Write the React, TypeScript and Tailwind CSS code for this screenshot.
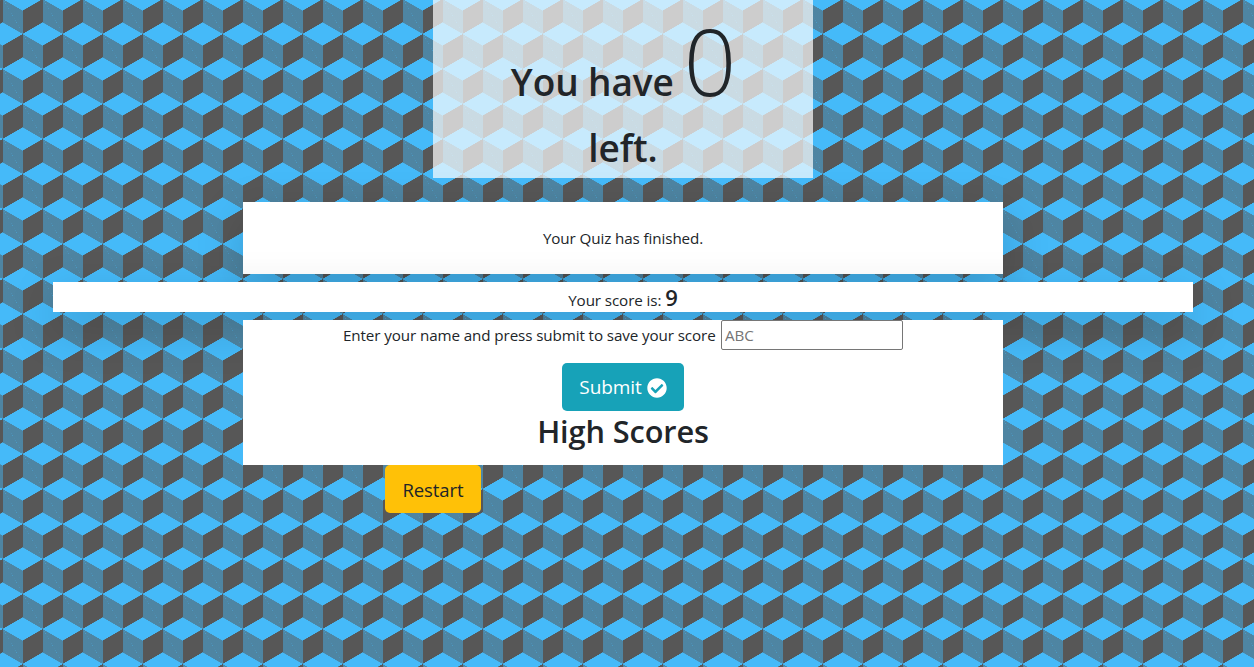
const cubes =
  "bg-[#575757] bg-size-[40px_70px] bg-position-[3px_34px,3px_34px,23px_69px,23px_69px,3px_34px,23px_69px] bg-[linear-gradient(30deg,#45baf9_12%,transparent_12.5%,transparent_87%,#45baf9_87.5%,#45baf9),linear-gradient(150deg,#45baf9_12%,transparent_12.5%,transparent_87%,#45baf9_87.5%,#45baf9),linear-gradient(30deg,#45baf9_12%,transparent_12.5%,transparent_87%,#45baf9_87.5%,#45baf9),linear-gradient(150deg,#45baf9_12%,transparent_12.5%,transparent_87%,#45baf9_87.5%,#45baf9),linear-gradient(60deg,#45baf977_25%,transparent_25.5%,transparent_75%,#45baf977_75%,#45baf977),linear-gradient(60deg,#45baf977_25%,transparent_25.5%,transparent_75%,#45baf977_75%,#45baf977)]";

function CheckCircle() {
  return (
    <svg viewBox="0 0 512 512" className="size-5" fill="currentColor" aria-hidden="true">
      <path d="M504 256c0 136.967-111.033 248-248 248S8 392.967 8 256 119.033 8 256 8s248 111.033 248 248zM227.314 387.314l184-184c6.248-6.248 6.248-16.379 0-22.627l-22.627-22.627c-6.248-6.249-16.379-6.249-22.628 0L216 308.118l-70.059-70.059c-6.248-6.248-16.379-6.248-22.628 0l-22.627 22.627c-6.248 6.248-6.248 16.379 0 22.627l104 104c6.249 6.249 16.379 6.249 22.628.001z" />
    </svg>
  );
}

export default function App() {
  return (
    <div
      className={`h-[667px] w-full font-['Open_Sans','Noto_Sans',sans-serif] text-[15.2px] tracking-[-0.1px] text-[#212529] ${cubes}`}
    >
      <div className="ml-[53px] flex w-[1140px] flex-col items-center">
        <header className="h-[178px] w-[380px] bg-white/70 pt-[5px] text-center text-[37px] leading-[48px] font-semibold">
          <div className="flex h-[112px] items-baseline justify-center gap-[10px] pl-px">
            <span>You have</span>
            <span className="text-[92px] leading-[112px] font-light">0</span>
          </div>
          <div className="pt-[7px]">left.</div>
        </header>

        <section className="mt-6 flex h-[72px] w-[760px] items-center justify-center bg-white shadow-[0_16px_48px_rgba(0,0,0,0.175)]">
          <p>Your Quiz has finished.</p>
        </section>

        <section className="relative mt-2 flex h-[30px] w-[1140px] items-baseline justify-center gap-[4px] bg-white leading-[36px] shadow-[0_16px_48px_rgba(0,0,0,0.175)]">
          <span>Your score is:</span>
          <span className="text-[22px] leading-[30px] font-semibold">9</span>
        </section>

        <section className="relative mt-2 flex h-[145px] w-[760px] flex-col items-center bg-white">
          <label className="flex h-[30px] w-[560px] items-center justify-between">
            <span className="whitespace-nowrap">
              Enter your name and press submit to save your score
            </span>
            <input
              placeholder="ABC"
              className="h-[30px] w-[182px] rounded-[2px] border border-[#767676] bg-white px-[3px] placeholder:text-[#757575]"
            />
          </label>
          <button className="mt-[13px] flex h-12 w-[122px] items-center justify-center gap-[5px] rounded-[5px] bg-[#17a2b8] pt-px text-[19px] text-white">
            <span>Submit</span>
            <CheckCircle />
          </button>
          <h2 className="mt-px text-[30.7px] leading-[38px] font-semibold">High Scores</h2>
        </section>

        <button className="mr-[380px] h-12 w-24 rounded-[5px] bg-[#ffc107] pt-[2px] text-[18.5px]">
          Restart
        </button>
      </div>
    </div>
  );
}
